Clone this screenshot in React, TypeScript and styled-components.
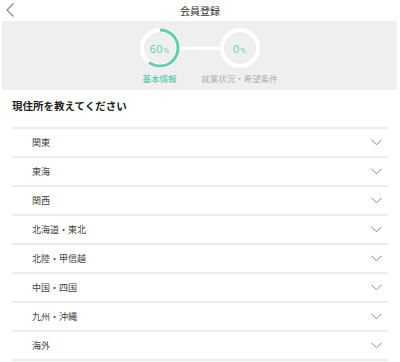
import React, { FC } from 'react';
import styled, { createGlobalStyle } from 'styled-components';

const GlobalStyle = createGlobalStyle`
  body {
    margin: 0;
    background: #fff;
    font-family: 'Noto Sans CJK JP', 'Noto Sans', sans-serif;
    color: #333;
  }
`;

const GREEN = '#5fcdb0';

const Page = styled.div`
  width: 400px;
  height: 362px;
  overflow: hidden;
`;

const Header = styled.header`
  position: relative;
  height: 21px;
  display: flex;
  align-items: center;
  justify-content: center;
`;

const BackButton = styled.button`
  position: absolute;
  left: 5px;
  top: 3px;
  width: 10px;
  height: 14px;
  padding: 0;
  border: 0;
  background: none;
  display: flex;
`;

const Title = styled.h1`
  margin: 0;
  font-size: 10px;
  font-weight: 400;
  line-height: 21px;
  color: #333;
`;

const Progress = styled.section`
  margin: 0 3px 0 2px;
  height: 69px;
  background: #efefef;
  display: flex;
  justify-content: center;
`;

const Step = styled.div`
  width: 80px;
  display: flex;
  flex-direction: column;
  align-items: center;
  padding-top: 7px;
  position: relative;
`;

const Connector = styled.div`
  position: absolute;
  top: 26px;
  left: 60px;
  width: 42px;
  height: 3px;
  background: #fff;
`;

const Ring = styled.div`
  position: relative;
  width: 40px;
  height: 40px;
  display: flex;
  align-items: center;
  justify-content: center;
  z-index: 1;

  svg {
    position: absolute;
    inset: 0;
  }
`;

const Percent = styled.span`
  position: relative;
  color: ${GREEN};
  font-family: 'Open Sans', 'Noto Sans', sans-serif;
  font-size: 11px;
  font-weight: 400;
  letter-spacing: 0.2px;

  small {
    font-size: 6.5px;
    margin-left: 1px;
  }
`;

const StepLabel = styled.span<{ $active?: boolean }>`
  margin-top: 4px;
  font-size: 8.5px;
  white-space: nowrap;
  color: ${p => (p.$active ? GREEN : '#b0b0b0')};
  font-weight: ${p => (p.$active ? 500 : 400)};
`;

const Question = styled.h2`
  margin: 0;
  padding: 9px 12px 0;
  height: 28px;
  font-size: 10.5px;
  font-weight: 700;
  line-height: 14px;
  color: #222;
`;

const List = styled.ul`
  list-style: none;
  margin: 0 12px;
  padding: 0;
  border-top: 2px solid #ececec;
`;

const Row = styled.li`
  box-sizing: border-box;
  height: 29px;
  border-bottom: 2px solid #ececec;
  display: flex;
  align-items: center;
  justify-content: space-between;
  padding: 0 6px 1px 20px;
  font-size: 9px;
  color: #444;
`;

const ProgressRing: FC<{ value: number }> = ({ value }) => {
  const r = 18;
  const c = 2 * Math.PI * r;
  return (
    <Ring>
      <svg width="40" height="40" viewBox="0 0 40 40">
        <circle cx="20" cy="20" r={r} fill="none" stroke="#fff" strokeWidth="4" />
        {value > 0 && (
          <circle
            cx="20"
            cy="20"
            r={r}
            fill="none"
            stroke={GREEN}
            strokeWidth="3"
            strokeDasharray={`${(c * value) / 100} ${c}`}
            transform="rotate(-90 20 20)"
          />
        )}
      </svg>
      <Percent>
        {value}
        <small>%</small>
      </Percent>
    </Ring>
  );
};

const Chevron: FC = () => (
  <svg width="11" height="7" viewBox="0 0 11 7">
    <path d="M0.5 0.8 L5.5 5.8 L10.5 0.8" fill="none" stroke="#888" strokeWidth="1" />
  </svg>
);

const regions = ['関東', '東海', '関西', '北海道・東北', '北陸・甲信越', '中国・四国', '九州・沖縄', '海外'];

const App: FC = () => (
  <Page>
    <GlobalStyle />
    <Header>
      <BackButton aria-label="戻る">
        <svg width="10" height="14" viewBox="0 0 10 14">
          <path d="M8.5 0.5 L2 7 L8.5 13.5" fill="none" stroke="#888" strokeWidth="1.2" />
        </svg>
      </BackButton>
      <Title>会員登録</Title>
    </Header>
    <Progress>
      <Step>
        <ProgressRing value={60} />
        <StepLabel $active>基本情報</StepLabel>
        <Connector />
      </Step>
      <Step>
        <ProgressRing value={0} />
        <StepLabel>就業状況・希望条件</StepLabel>
      </Step>
    </Progress>
    <Question>現住所を教えてください</Question>
    <List>
      {regions.map(name => (
        <Row key={name}>
          <span>{name}</span>
          <Chevron />
        </Row>
      ))}
    </List>
  </Page>
);

export default App;
